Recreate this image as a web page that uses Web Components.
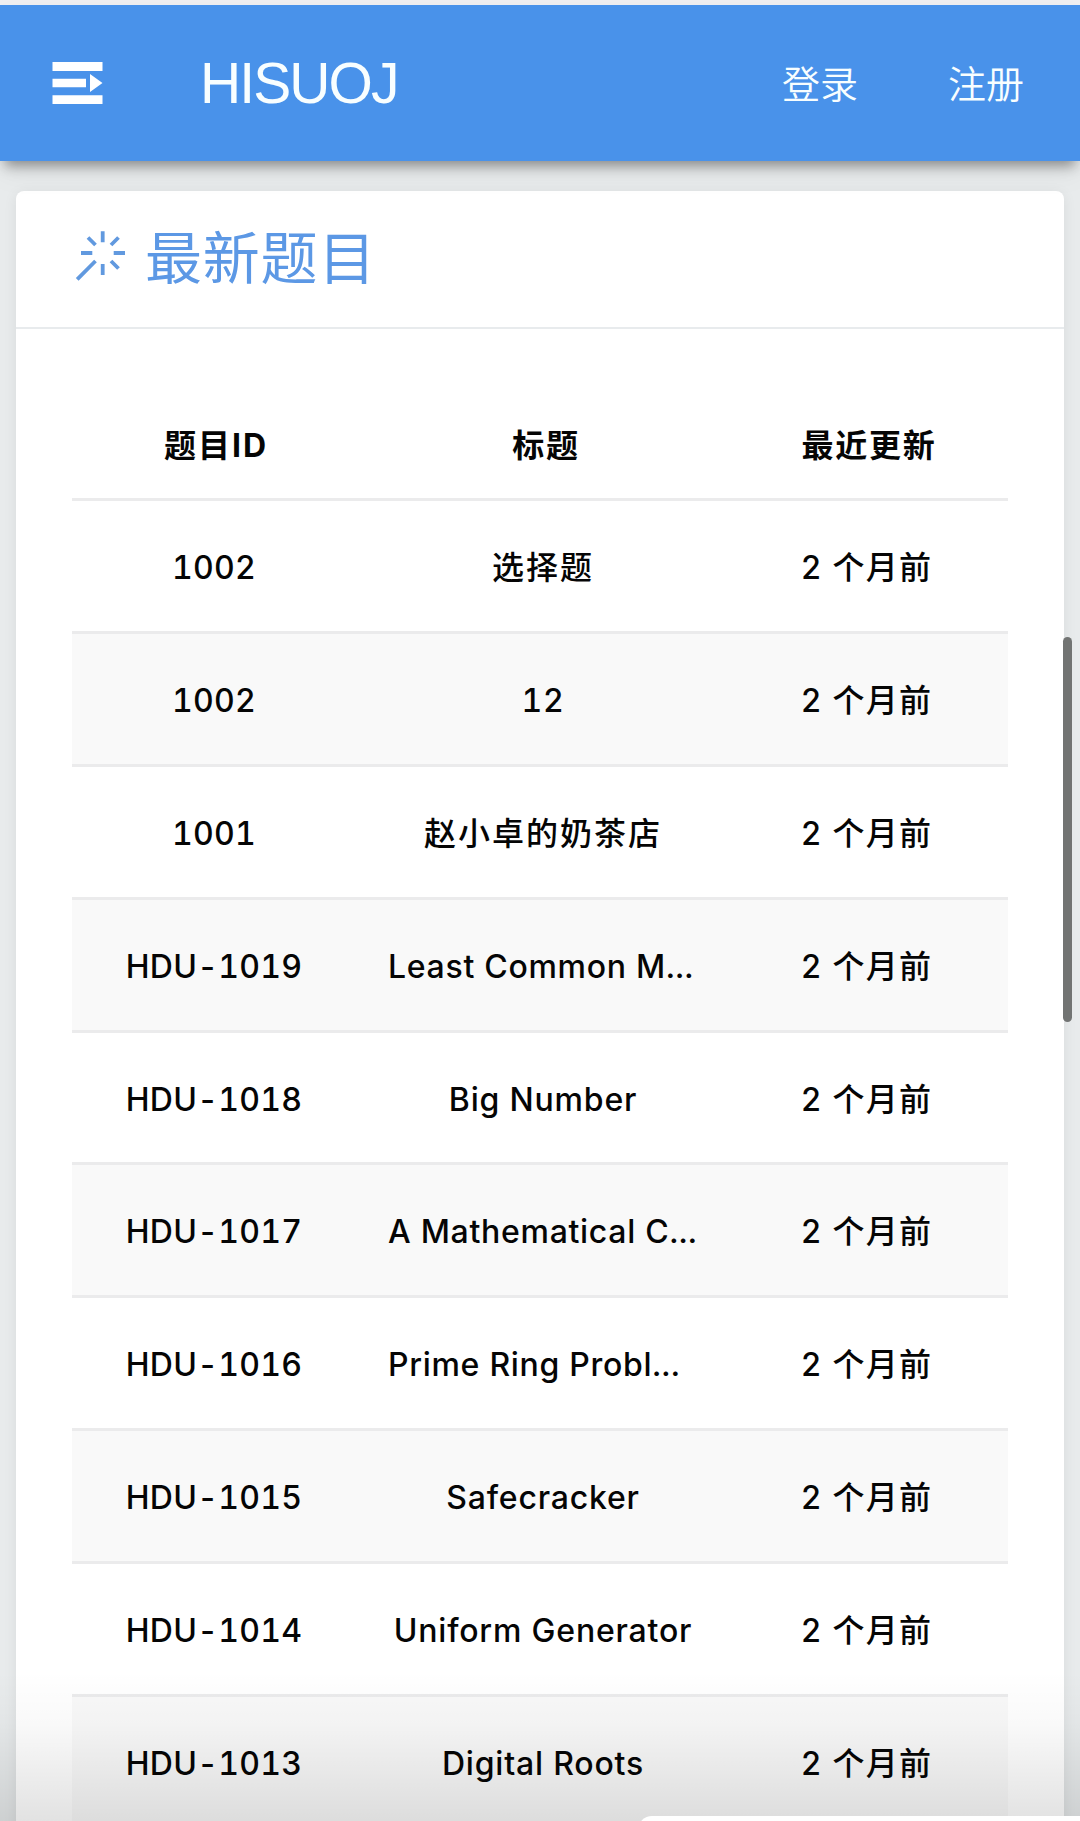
<!DOCTYPE html>
<html lang="zh-CN">
<head>
<meta charset="utf-8">
<title>HISUOJ</title>
<style>
  html, body { margin: 0; height: 1821px; overflow: hidden; }
  body {
    background: #e8ebec;
    font-family: Inter, "Noto Sans CJK SC", sans-serif;
    color: #050505;
  }
</style>
</head>
<body>
<oj-app>
  <oj-navbar>
    <span slot="brand">HISUOJ</span>
    <span slot="links">登录</span>
    <span slot="links">注册</span>
  </oj-navbar>
  <oj-card>
    <span slot="title">最新题目</span>
    <oj-problem-table></oj-problem-table>
  </oj-card>
</oj-app>

<script>
const define = (name, html, setup) => {
  const tpl = document.createElement('template');
  tpl.innerHTML = html;
  customElements.define(name, class extends HTMLElement {
    constructor(){
      super();
      this.attachShadow({mode:'open'}).appendChild(tpl.content.cloneNode(true));
    }
    connectedCallback(){
      if(setup) setup(this.shadowRoot, this);
    }
  });
};

/* -----------------------
   APP SHELL
------------------------ */

define('oj-app', /*html*/`
  <style>
    :host {
      display: block;
      position: relative;
      box-sizing: border-box;
      width: 1080px;
      height: 1821px;
      padding-top: 5px;
      overflow: hidden;
      background: linear-gradient(#f1f0f2 5px, transparent 5px);
    }
    .fade {
      position: absolute;
      inset: auto 0 0 0;
      height: 150px;
      background: linear-gradient(rgba(0,0,0,0), rgba(0,0,0,.025) 35%, rgba(0,0,0,.115));
    }
    .thumb {
      position: absolute;
      left: 1063px;
      top: 637px;
      width: 9px;
      height: 385px;
      border-radius: 5px;
      background: #727473;
    }
    .sheet {
      position: absolute;
      left: 638px;
      right: -20px;
      top: 1816px;
      height: 30px;
      border-radius: 14px;
      background: #fff;
    }
  </style>
  <slot></slot>
  <div class="fade"></div>
  <div class="thumb"></div>
  <div class="sheet"></div>
`);

/* -----------------------
   NAVBAR
------------------------ */

define('oj-navbar', /*html*/`
  <style>
    :host {
      display: flex;
      align-items: center;
      box-sizing: border-box;
      height: 156px;
      padding: 0 56px 0 52px;
      background: #4992ea;
      color: #f8feff;
      box-shadow: 0 10px 12px -5px rgba(0,0,0,.38), 0 10px 30px rgba(0,0,0,.06);
      position: relative;
    }
    svg { display: block; flex: none; }
    .brand {
      margin-left: 95px;
      padding-left: 1px;
      font-family: "Liberation Sans", Arial, sans-serif;
      font-size: 57px;
      letter-spacing: -1.900px;
      line-height: 64px;
    }
    .links {
      display: flex;
      gap: 90px;
      margin-left: auto;
      padding-bottom: 3px;
      font-family: "Noto Sans CJK SC", sans-serif;
      font-size: 38px;
      font-weight: 350;
      line-height: 56px;
    }
  </style>
  <svg width="52" height="44" viewBox="0 0 52 44" fill="#fff">
    <path d="M.5 1h50v9H.5zM.5 17.700h33.500v8.600H.5zM.5 34.300h50V43H.5zM38 13v18l12.500-9z"/>
  </svg>
  <div class="brand"><slot name="brand"></slot></div>
  <div class="links"><slot name="links"></slot></div>
`);

/* -----------------------
   CARD
------------------------ */

define('oj-card', /*html*/`
  <style>
    :host {
      display: block;
      box-sizing: border-box;
      width: 1047.500px;
      height: 1700px;
      margin: 30px 0 0 16px;
      border-radius: 8px;
      background: #fff;
      box-shadow: 0 2px 14px rgba(0,0,0,.07);
    }
    header {
      display: flex;
      align-items: center;
      box-sizing: border-box;
      height: 138px;
      padding: 0 0 6px 58px;
      border-bottom: 2px solid #e8ebed;
      color: #5c98e5;
    }
    .title {
      margin-left: 17px;
      padding-top: 5px;
      font-size: 57px;
      letter-spacing: .800px;
      line-height: 80px;
      font-weight: 400;
    }
    .body { padding: 61px 55px 0 56px; }
  </style>
  <header>
    <svg width="54" height="54" viewBox="0 0 54 54" fill="none" stroke="#6199df" stroke-width="3.800">
      <path d="M28.700 2.300v11M28.700 35v11M7 24h11.300M39.700 24H51M14 8.500l7.500 7.500M44.500 8.500L37 16M37 32l7.500 7.500M21.500 32L3.200 50.300"/>
    </svg>
    <div class="title"><slot name="title"></slot></div>
  </header>
  <div class="body"><slot></slot></div>
`);

/* -----------------------
   PROBLEM TABLE
------------------------ */

const PROBLEMS = [
  ['1002', '选择题'],
  ['1002', '12'],
  ['1001', '赵小卓的奶茶店'],
  ['HDU-1019', 'Least Common M...'],
  ['HDU-1018', 'Big Number'],
  ['HDU-1017', 'A Mathematical C...'],
  ['HDU-1016', 'Prime Ring Probl...'],
  ['HDU-1015', 'Safecracker'],
  ['HDU-1014', 'Uniform Generator'],
  ['HDU-1013', 'Digital Roots']
];

define('oj-row', /*html*/`
  <style>
    :host {
      display: grid;
      grid-template-columns: 288px 370px 278px;
      align-items: center;
      box-sizing: border-box;
      height: 132.900px;
      padding-top: 4px;
      border-bottom: 3px solid #ebebec;
      font-size: 32px;
      line-height: 48px;
      font-weight: 500;
      font-variant-numeric: tabular-nums;
      text-align: center;
      white-space: nowrap;
    }
    :host([striped]) { background: #f9f9f9; }
    :host([head]) {
      height: 111px;
      font-weight: 700;
    }
    div { padding-right: 4px; }
    :host([head]) div { padding-right: 0; }
    .id { letter-spacing: .3px; }
    .title { letter-spacing: .8px; }
    .title.cjk { letter-spacing: 2px; }
    .title.cut { text-align: left; padding-left: 28px; letter-spacing: .7px; }
    .time { letter-spacing: 1.200px; padding-right: 5px; }
    :host([head]) .id { letter-spacing: 2px; }
    :host([head]) .title { letter-spacing: 1.700px; padding-left: 2px; }
    :host([head]) .time { letter-spacing: 1.700px; }
  </style>
  <div class="id"></div>
  <div class="title"></div>
  <div class="time"></div>
`, (root, el) => {
  const title = root.querySelector('.title');
  root.querySelector('.id').textContent = el.getAttribute('pid');
  title.textContent = el.getAttribute('name');
  title.classList.toggle('cjk', /[\u4e00-\u9fff]/.test(title.textContent));
  title.classList.toggle('cut', title.textContent.endsWith('...'));
  root.querySelector('.time').textContent = el.getAttribute('time');
});

define('oj-problem-table', /*html*/`
  <style>
    :host { display: block; width: 936px; }
  </style>
  <oj-row head pid="题目ID" name="标题" time="最近更新"></oj-row>
`, root => {
  PROBLEMS.forEach(([pid, name], i) => {
    const row = document.createElement('oj-row');
    row.setAttribute('pid', pid);
    row.setAttribute('name', name);
    row.setAttribute('time', '2 个月前');
    if(i % 2) row.setAttribute('striped', '');
    root.appendChild(row);
  });
});
</script>
</body>
</html>
